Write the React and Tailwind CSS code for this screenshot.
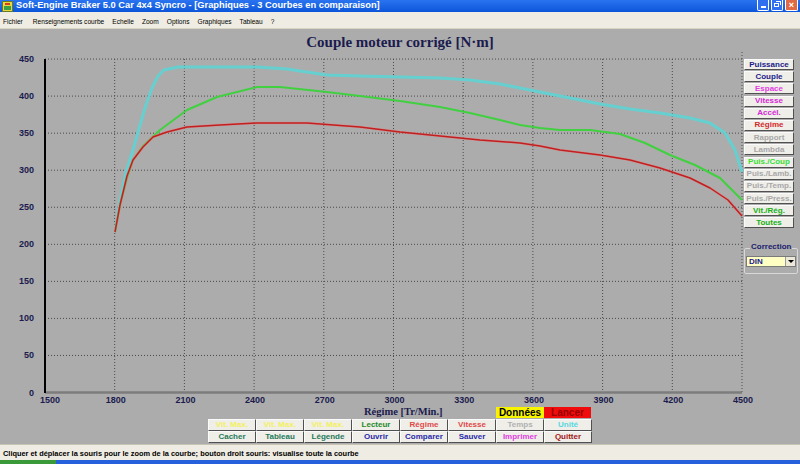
import React from "react";

const yTicks = [450, 400, 350, 300, 250, 200, 150, 100, 50, 0];
const xTicks = [1500, 1800, 2100, 2400, 2700, 3000, 3300, 3600, 3900, 4200, 4500];
const yPos = (v) => 392.5 - v * 0.741;
const xPos = (r) => 45 + ((r - 1500) / 300) * 69.7;

const cyan = [
  [115, 232], [120, 200], [126, 172], [133, 150], [140, 125], [146, 105], [152, 88], [158, 76],
  [164, 70], [178, 67], [257, 67], [287, 69], [300, 71], [327, 75], [360, 76], [400, 77],
  [440, 78], [470, 80], [500, 84], [520, 88], [545, 93], [570, 98], [600, 104], [630, 109],
  [660, 113], [690, 118], [710, 123], [725, 133], [735, 150], [742, 172],
];
const green = [
  [115, 232], [120, 205], [127, 178], [133, 160], [143, 146], [160, 130], [187, 110], [217, 97],
  [257, 87], [280, 87], [327, 92], [360, 96], [400, 101], [440, 107], [470, 113], [500, 120],
  [520, 125], [540, 128], [560, 130], [590, 130], [620, 134], [645, 143], [670, 155], [695, 165],
  [720, 178], [742, 200],
];
const red = [
  [115, 232], [120, 205], [127, 176], [133, 160], [143, 147], [153, 137], [167, 132], [187, 127],
  [220, 125], [257, 123], [307, 123], [360, 127], [400, 132], [440, 136], [480, 140], [520, 143],
  [540, 146], [560, 150], [600, 155], [630, 160], [660, 168], [690, 178], [710, 188], [728, 200],
  [742, 216],
];
const pts = (arr) => arr.map(([x, y]) => `${x},${y}`).join(" ");

const sideButtons = [
  { label: "Puissance", color: "text-[#1c1c8a]" },
  { label: "Couple", color: "text-[#1c1c8a]" },
  { label: "Espace", color: "text-[#e23ee2]" },
  { label: "Vitesse", color: "text-[#d42ad4]" },
  { label: "Accél.", color: "text-[#d42ad4]" },
  { label: "Régime", color: "text-[#d42a2a]" },
  { label: "Rapport", color: "text-[#a8a8a8]" },
  { label: "Lambda", color: "text-[#a8a8a8]" },
  { label: "Puis./Coup", color: "text-[#38e038]" },
  { label: "Puis./Lamb.", color: "text-[#a8a8a8]" },
  { label: "Puis./Temp.", color: "text-[#a8a8a8]" },
  { label: "Puis./Press.", color: "text-[#a8a8a8]" },
  { label: "Vit./Rég.", color: "text-[#18b018]" },
  { label: "Toutes", color: "text-[#18b018]" },
];

const bottomRow1 = [
  { label: "Vit. Max.", color: "text-[#f4f060]" },
  { label: "Vit. Max.", color: "text-[#f4f060]" },
  { label: "Vit. Max.", color: "text-[#f4f060]" },
  { label: "Lecteur", color: "text-[#1f8a2a]" },
  { label: "Régime", color: "text-[#e04848]" },
  { label: "Vitesse", color: "text-[#e04848]" },
  { label: "Temps", color: "text-[#b0b0b0]" },
  { label: "Unité", color: "text-[#58d8e0]" },
];
const bottomRow2 = [
  { label: "Cacher", color: "text-[#1f7a5a]" },
  { label: "Tableau", color: "text-[#1f7a5a]" },
  { label: "Légende", color: "text-[#1f7a5a]" },
  { label: "Ouvrir", color: "text-[#2a2aa8]" },
  { label: "Comparer", color: "text-[#2a2aa8]" },
  { label: "Sauver", color: "text-[#2a2aa8]" },
  { label: "Imprimer", color: "text-[#e040e0]" },
  { label: "Quitter", color: "text-[#a01818]" },
];

const menuItems = ["Fichier", "Renseignements courbe", "Echelle", "Zoom", "Options", "Graphiques", "Tableau", "?"];

function Btn({ label, color }) {
  return (
    <div
      className={`flex items-center justify-center h-full bg-[#efeee8] border border-t-[#fbfbfb] border-l-[#fbfbfb] border-b-[#505050] border-r-[#505050] text-[8px] font-bold leading-none ${color}`}
    >
      {label}
    </div>
  );
}

function Chart() {
  return (
    <svg width="743" height="354" className="block shrink-0 overflow-visible">
      <g transform="translate(0,-52)" fontFamily="'Liberation Sans', Arial, sans-serif" fontWeight="bold" fontSize="9" fill="#1b1b4e">
        {yTicks.slice(0, 9).map((v) => (
          <line key={v} x1="45" x2="742" y1={yPos(v)} y2={yPos(v)} stroke="#4a4a4a" strokeDasharray="1 2" />
        ))}
        {xTicks.slice(1).map((r) => (
          <line key={r} x1={xPos(r)} x2={xPos(r)} y1={r === 4500 ? 52 : 59} y2="392" stroke="#4a4a4a" strokeDasharray="1 2" />
        ))}
        {yTicks.map((v) => (
          <text key={v} x="34" y={yPos(v) + 3} textAnchor="end">{v}</text>
        ))}
        {xTicks.map((r) => (
          <text key={r} x={xPos(r) + (r === 1500 ? 5 : 1)} y="403" textAnchor="middle">{r}</text>
        ))}
        <polyline points={pts(cyan)} fill="none" stroke="#66d0d0" strokeWidth="3" strokeLinejoin="round" />
        <polyline points={pts(green)} fill="none" stroke="#40d040" strokeWidth="2" strokeLinejoin="round" />
        <polyline points={pts(red)} fill="none" stroke="#e88080" strokeWidth="2.5" strokeLinejoin="round" opacity="0.6" />
        <polyline points={pts(red)} fill="none" stroke="#c02020" strokeWidth="1.5" strokeLinejoin="round" />
        <line x1="45" x2="742" y1="392.5" y2="392.5" stroke="#7c7c7c" strokeWidth="2.5" />
        <line x1="45" x2="45" y1="59" y2="393" stroke="#000" strokeWidth="2" />
      </g>
    </svg>
  );
}

export default function App() {
  return (
    <div className="w-[800px] h-[464px] overflow-hidden flex flex-col bg-[#acacac] font-['Liberation_Sans',Arial,sans-serif]">
      {/* title bar (top is cut off) */}
      <div className="h-[12px] shrink-0 flex items-center bg-gradient-to-b from-[#2a74f0] to-[#0a55da] pl-[2px] pr-[2px]">
        <svg width="11" height="11" viewBox="0 0 11 11" className="shrink-0">
          <rect x="0.5" y="0.5" width="10" height="10" fill="#e8d840" stroke="#6a7a20" />
          <rect x="2" y="5" width="7" height="4" fill="#3aa048" />
          <rect x="3" y="2" width="5" height="2" fill="#d04020" />
        </svg>
        <span className="ml-[3px] text-white font-bold text-[9.3px] leading-none whitespace-nowrap">
          Soft-Engine Braker 5.0 Car 4x4 Syncro - [Graphiques - 3 Courbes en comparaison]
        </span>
        <div className="ml-auto flex gap-[2px] items-start h-full">
          <div className="w-[12px] h-[11px] rounded-b-[2px] bg-[#2f6ff0] border border-white border-t-0 flex items-end justify-center pb-[2px]">
            <div className="w-[5px] h-[2px] bg-white" />
          </div>
          <div className="w-[12px] h-[11px] rounded-b-[2px] bg-[#2f6ff0] border border-white border-t-0 relative">
            <div className="absolute left-[2px] top-[3px] w-[5px] h-[4px] border border-white" />
            <div className="absolute left-[4px] top-[1px] w-[5px] h-[4px] border border-white border-l-0 border-b-0" />
          </div>
          <div className="w-[13px] h-[11px] rounded-b-[2px] bg-[#e06a44] border border-white border-t-0 flex items-center justify-center text-white text-[9px] font-bold leading-none">
            ×
          </div>
        </div>
      </div>
      {/* menu bar */}
      <div className="h-[17px] shrink-0 bg-[#efede3] border-b border-[#d8d4c4] flex items-center pt-[4px] pl-[3px] text-[6.6px] text-black leading-none">
        {menuItems.map((m, i) => (
          <span key={m} className={i === 0 ? "mr-[10px]" : "mr-[8px]"}>
            {m}
          </span>
        ))}
      </div>
      {/* chart window */}
      <div className="flex-1 flex flex-col">
        <div className="h-[23px] flex items-center justify-center pt-[4px] font-['Liberation_Serif',serif] font-bold text-[15px] text-[#1b1b4e]">
          Couple moteur corrigé [N·m]
        </div>
        <div className="flex">
          <Chart />
          <div className="w-[57px] pl-[1px] pt-[7px] flex flex-col">
            <div className="flex flex-col gap-[1.2px] w-[50px]">
              {sideButtons.map((b) => (
                <div key={b.label} className="h-[11px]">
                  <Btn label={b.label} color={b.color} />
                </div>
              ))}
            </div>
            <div className="mt-[20px] w-[54px] border border-[#d8d8d8] rounded-[2px] h-[26px] relative">
              <span className="absolute -top-[6px] left-[5px] bg-[#acacac] px-[1px] text-[8px] font-bold text-[#1b1b6e] leading-none">
                Correction
              </span>
              <div className="mt-[7px] ml-[1px] w-[50px] h-[11px] bg-[#ffffc4] border border-[#7a7a7a] flex items-center">
                <span className="pl-[2px] text-[8px] font-bold text-[#1b1b8a] leading-none">DIN</span>
                <div className="ml-auto w-[10px] h-full bg-[#ece9d8] border-l border-[#9a9a9a] flex items-center justify-center">
                  <div className="w-0 h-0 border-l-[3px] border-r-[3px] border-t-[3px] border-l-transparent border-r-transparent border-t-black" />
                </div>
              </div>
            </div>
          </div>
        </div>
        {/* bottom buttons */}
        <div className="flex items-center h-[13px]">
          <div className="w-[496px] pl-[364px] font-['Liberation_Serif',serif] font-bold text-[10.5px] text-[#1b1b4e] leading-none whitespace-nowrap">
            Régime [Tr/Min.]
          </div>
          <div className="w-[48px] h-[11px] bg-[#f8f400] flex items-center justify-center text-[10px] font-bold text-black leading-none">
            Données
          </div>
          <div className="w-[47px] h-[11px] bg-[#f00c0c] flex items-center justify-center text-[10px] font-bold text-[#900] leading-none">
            Lancer
          </div>
        </div>
        <div className="pl-[208px] grid grid-cols-[repeat(8,48px)] grid-rows-[12px_12px]">
          {bottomRow1.map((b, i) => (
            <Btn key={"a" + i} label={b.label} color={b.color} />
          ))}
          {bottomRow2.map((b, i) => (
            <Btn key={"b" + i} label={b.label} color={b.color} />
          ))}
        </div>
      </div>
      {/* status bar */}
      <div className="h-[16px] shrink-0 bg-[#efede3] border-t border-[#c8c4b4] flex items-center pt-[3px] pl-[3px]">
        <span className="text-[7.4px] font-bold text-black leading-none whitespace-nowrap">
          Cliquer et déplacer la souris pour le zoom de la courbe; bouton droit souris: visualise toute la courbe
        </span>
      </div>
      {/* taskbar strip */}
      <div className="h-[4px] shrink-0 flex bg-[#2760dc]">
        <div className="w-[56px] bg-[#3a9a3a]" />
      </div>
    </div>
  );
}
